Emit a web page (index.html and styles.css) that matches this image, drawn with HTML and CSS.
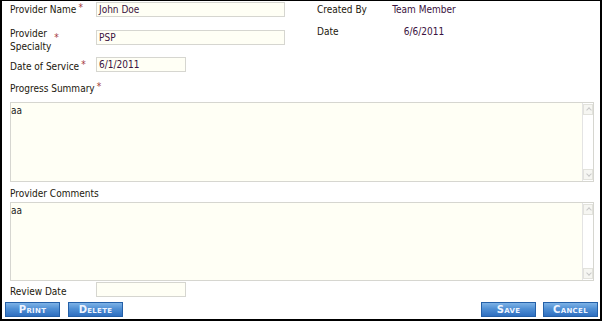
FILE: index.html
```html
<!DOCTYPE html>
<html>
<head>
<meta charset="utf-8">
<link rel="stylesheet" href="styles.css">
</head>
<body>
<div class="frame">
  <div class="top">
    <div class="fields">
      <div class="row r1">
        <div class="lbl">Provider Name<span class="req">*</span></div>
        <div class="inp wide">John Doe</div>
      </div>
      <div class="row r2">
        <div class="lbl two"><span>Provider<br>Specialty</span><span class="req req2">*</span></div>
        <div class="inp wide">PSP</div>
      </div>
      <div class="row r3">
        <div class="lbl">Date of Service<span class="req">*</span></div>
        <div class="inp short">6/1/2011</div>
      </div>
    </div>
    <div class="meta">
      <div class="mrow m1"><span class="mlbl">Created By</span><span class="mval">Team Member</span></div>
      <div class="mrow m2"><span class="mlbl">Date</span><span class="mval">6/6/2011</span></div>
    </div>
  </div>
  <div class="lbl sec s1">Progress Summary<span class="req">*</span></div>
  <div class="area a1">
    <div class="atext">aa</div>
    <div class="sbar"><span class="arr up"></span><span class="arr down"></span></div>
  </div>
  <div class="lbl sec s2">Provider Comments</div>
  <div class="area a2">
    <div class="atext">aa</div>
    <div class="sbar"><span class="arr up"></span><span class="arr down"></span></div>
  </div>
  <div class="row r4">
    <div class="lbl">Review Date</div>
    <div class="inp short"></div>
  </div>
  <div class="buttons">
    <div class="grp">
      <button class="btn b-print">Print</button>
      <button class="btn b-delete">Delete</button>
    </div>
    <div class="grp">
      <button class="btn b-save">Save</button>
      <button class="btn b-cancel">Cancel</button>
    </div>
  </div>
</div>
</body>
</html>
```

FILE: styles.css
```css
* { box-sizing: border-box; }
html, body { margin: 0; padding: 0; background: #fff; }
body {
  font-family: "DejaVu Sans", sans-serif;
  font-stretch: condensed;
  font-size: 10px;
  line-height: 13px;
  color: #22180c;
}
.frame {
  width: 602px;
  height: 321px;
  border-style: solid;
  border-color: #000;
  border-width: 1px 2px 2px 2px;
  padding: 0 0 0 8px;
  display: flex;
  flex-direction: column;
}
.top { display: flex; }
.fields { width: 307px; display: flex; flex-direction: column; }
.row { display: flex; align-items: flex-start; }
.lbl { width: 86px; flex: none; white-space: nowrap; }
.req { color: #a33a3a; margin-left: 2px; position: relative; top: -2px; }
.r1 { height: 28px; padding-top: 1px; }
.r1 .lbl { padding-top: 1px; }
.r2 { height: 27px; padding-top: 1px; }
.r2 .lbl { margin-top: -3px; display: flex; align-items: flex-start; }
.req2 { margin-left: 3px; margin-top: 4px; top: 0; }
.r3 { height: 28px; padding-top: 1px; }
.r3 .lbl { padding-top: 3px; }
.inp {
  height: 15px;
  border: 1px solid #d6d6d0;
  background: #fffff5;
  color: #3a1240;
  padding: 0 0 0 2px;
  line-height: 13px;
}
.wide { width: 189px; }
.short { width: 90px; }
.meta { display: flex; flex-direction: column; padding-left: 0; }
.mrow { display: flex; white-space: nowrap; }
.m1 { height: 24px; padding-top: 2px; }
.m2 { padding-top: 0; }
.mlbl { width: 78px; }
.mval { width: 58px; text-align: center; color: #3a1240; display: flex; justify-content: center; }
.sec { width: auto; }
.s1 { height: 19px; margin-top: -2px; padding-top: 0; }
.s2 { height: 16px; margin-top: 4px; padding-top: 1px; }
.area {
  width: 584px;
  height: 80px;
  border: 1px solid #d6d6d0;
  background: #fffff5;
  display: flex;
}
.a1 { margin-top: 1px; }
.a2 { height: 79px; }
.atext { flex: 1; padding: 1px 0 0 0; font-size: 10px; color: #222; }
.sbar {
  width: 11px;
  background: #fff;
  border-left: 1px solid #e4e4e4;
  display: flex;
  flex-direction: column;
  justify-content: space-between;
  padding: 1px 0;
}
.arr {
  display: block;
  width: 10px;
  height: 11px;
  border: 1px solid #e2e2dc;
  background: #f6f6f2;
  position: relative;
}
.arr::after {
  content: "";
  position: absolute;
  width: 3px;
  height: 3px;
  border-color: #c8c8c8;
  border-style: solid;
}
.up::after { top: 3px; border-width: 1px 0 0 1px; transform: rotate(45deg); left: 3px; }
.down::after { top: 2px; border-width: 0 1px 1px 0; transform: rotate(45deg); left: 3px; }
.r4 { height: 21px; padding-top: 1px; }
.r4 .lbl { padding-top: 3px; }
.buttons {
  display: flex;
  justify-content: space-between;
  margin-left: -5px;
  padding-right: 2px;
}
.grp { display: flex; gap: 8px; }
.btn {
  width: 55px;
  height: 15px;
  padding: 0;
  border: 1px solid #2460a8;
  background: linear-gradient(#7db2e6 0%, #4f8fd4 45%, #2f6fc0 100%);
  color: #eef4ff;
  font-family: "DejaVu Sans", sans-serif;
  font-size: 10px;
  font-weight: bold;
  font-variant: small-caps;
  line-height: 13px;
  letter-spacing: 0.3px;
}
.b-cancel { width: 55px; }
.grp + .grp { gap: 7px; }
```
